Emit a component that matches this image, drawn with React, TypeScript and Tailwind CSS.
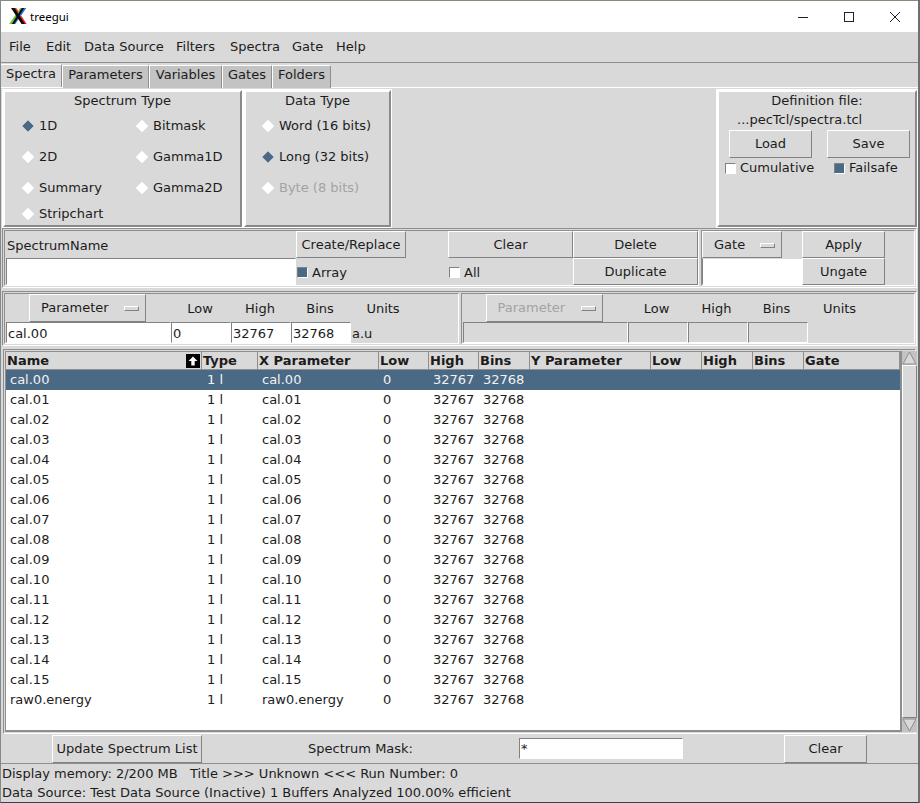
import React from "react";

const btn = "flex items-center justify-center border border-t-white border-l-white border-r-[#828282] border-b-[#828282] bg-[#d9d9d9]";
const sunk = "flex items-center border border-t-[#828282] border-l-[#828282] border-r-white border-b-white";
const groove = "border border-t-[#8e8e8e] border-l-[#8e8e8e] border-r-white border-b-white";
const ridge = "border-2 border-t-white border-l-white border-r-[#8a8a8a] border-b-[#8a8a8a]";

function Radio({ on }: { on?: boolean }) {
  return (
    <svg width="14" height="14" viewBox="0 0 14 14" className="shrink-0">
      <polygon points="7,1 13,7 7,13 1,7" fill={on ? "#4a6984" : "#ffffff"} stroke={on ? "#d9d9d9" : "#ffffff"} strokeWidth="0.6" />
    </svg>
  );
}

function RadioItem({ label, on, dim, h }: { label: string; on?: boolean; dim?: boolean; h: string }) {
  return (
    <div className={`flex items-center gap-[4px] ${h} ${dim ? "text-[#a3a3a3]" : ""}`}>
      <Radio on={on} />
      <span>{label}</span>
    </div>
  );
}

function Check({ on }: { on?: boolean }) {
  return (
    <span className={`block w-[11px] h-[11px] shrink-0 border border-t-[#828282] border-l-[#828282] border-r-white border-b-white ${on ? "bg-[#4a6984]" : "bg-white"}`} />
  );
}

function MenuBtn({ label, w, dim }: { label: string; w: string; dim?: boolean }) {
  return (
    <div className={`${btn} ${w} h-[28px] relative justify-start pl-[11px] ${dim ? "text-[#a3a3a3]" : ""}`}>
      <span>{label}</span>
      <span className="absolute right-[6px] top-[11px] w-[15px] h-[5px] border border-t-white border-l-white border-r-[#828282] border-b-[#828282]" />
    </div>
  );
}

const columns: [string, number][] = [
  ["Name", 196], ["Type", 56], ["X Parameter", 121], ["Low", 50], ["High", 50], ["Bins", 51],
  ["Y Parameter", 121], ["Low", 51], ["High", 51], ["Bins", 51], ["Gate", 96],
];

const names = [...Array.from({ length: 16 }, (_, i) => `cal.${String(i).padStart(2, "0")}`), "raw0.energy"];

const menus: [string, string][] = [
  ["File", "w-[37px]"], ["Edit", "w-[38px]"], ["Data Source", "w-[92px]"], ["Filters", "w-[54px]"],
  ["Spectra", "w-[62px]"], ["Gate", "w-[44px]"], ["Help", "w-[40px]"],
];

function ParamRow({ left, dim }: { left: boolean; dim?: boolean }) {
  const entries = [
    { w: "w-[165px]", t: left ? "cal.00" : "" },
    { w: "w-[60px]", t: left ? "0" : "" },
    { w: "w-[60px]", t: left ? "32767" : "" },
    { w: "w-[60px]", t: left ? "32768" : "" },
  ];
  return (
    <div className={`${groove} h-[51px] flex-1 flex flex-col pl-px`}>
      <div className="flex items-center h-[28px]">
        <div className="w-[23px]" />
        <MenuBtn label="Parameter" w="w-[117px]" dim={dim} />
        <span className="ml-[35px] w-[38px] text-center pt-[2px]">Low</span>
        <span className="ml-[19px] w-[44px] text-center pt-[2px]">High</span>
        <span className="ml-[18px] w-[40px] text-center pt-[2px]">Bins</span>
        <span className="ml-[18px] w-[50px] text-center pt-[2px]">Units</span>
      </div>
      <div className="flex items-center h-[21px]">
        {entries.map((e, i) => (
          <div key={i} className={`${sunk} ${e.w} h-[21px] pl-[1px] pt-[2px] ${left ? "bg-white" : ""}`}>{e.t}</div>
        ))}
        {left && <span className="ml-[1px] pt-[2px]">a.u</span>}
      </div>
    </div>
  );
}

export default function App() {
  return (
    <div className="w-[920px] h-[803px] flex flex-col bg-[#d9d9d9] text-[13px] leading-[16px] text-[#1c1c1c] overflow-hidden border-l border-l-[#7f8a8c] border-r-2 border-r-[#6f6f6f] border-b border-b-[#30454a] font-['DejaVu_Sans',sans-serif] whitespace-pre">
      {/* title bar */}
      <div className="h-[32px] shrink-0 bg-white flex items-center pl-[8px] border-t border-t-[#8a8a7a]">
        <svg width="18" height="18" viewBox="0 0 18 18" className="shrink-0 -translate-y-px">
          <path d="M2.5 1 L6 1 L16.5 17 L13 17 Z" fill="#ff2020" transform="translate(1.2 0)" />
          <path d="M12.5 1 L16 1 L5 17 L1.5 17 Z" fill="#2f6fe8" transform="translate(1.3 0)" />
          <path d="M12.5 1 L16 1 L5 17 L1.5 17 Z" fill="#5cc83a" transform="translate(-1.3 0)" />
          <path d="M2 1 L5.5 1 L16 17 L12.5 17 Z" fill="#0a0a0a" />
          <path d="M12.8 1 L15.2 1 L5.2 17 L2.8 17 Z" fill="#0a0a0a" />
        </svg>
        <span className="ml-[3px] text-[11.5px] text-black font-['Noto_Sans',sans-serif]">treegui</span>
        <div className="flex-1" />
        <svg width="14" height="14" viewBox="0 0 14 14" className="mr-[32px]"><path d="M2 7.5 H12" stroke="#222" strokeWidth="1" /></svg>
        <svg width="14" height="14" viewBox="0 0 14 14" className="mr-[32px]"><rect x="2.5" y="2.5" width="9" height="9" fill="none" stroke="#222" strokeWidth="1" /></svg>
        <svg width="14" height="14" viewBox="0 0 14 14" className="mr-[16px]"><path d="M2 2 L12 12 M12 2 L2 12" stroke="#222" strokeWidth="1" /></svg>
      </div>

      {/* menu */}
      <div className="h-[31px] shrink-0 flex items-center pl-[8px] border-b border-b-[#8e8e8e]">
        {menus.map(([m, w]) => (
          <span key={m} className={w}>{m}</span>
        ))}
      </div>

      {/* tabs */}
      <div className="h-[25px] shrink-0 flex items-stretch border-b border-b-white pt-px">
        <div className="w-[61px] flex items-center justify-center pb-[4px] border-r border-r-[#8e8e8e] border-t border-t-white">Spectra</div>
        {[["Parameters", "w-[87px]"], ["Variables", "w-[73px]"], ["Gates", "w-[50px]"], ["Folders", "w-[59px]"]].map(([t, w]) => (
          <div key={t} className={`${w} flex items-center justify-center pb-[5px] bg-[#c3c3c3] border-l border-l-white border-t border-t-white border-r border-r-[#8e8e8e] rounded-tr-[2px] mt-px h-[23px]`}>{t}</div>
        ))}
      </div>

      {/* top panels */}
      <div className="h-[139px] shrink-0 flex pl-[2px] pr-[1px] pt-[2px]">
        <div className={`${ridge} w-[239px] h-[137px] flex flex-col border-[#8a8a8a] outline-1 outline-white`}>
          <div className="h-[17px] text-center mt-px">Spectrum Type</div>
          <div className="grid grid-cols-[114px_1fr] pl-[16px]">
            <RadioItem label="1D" on h="h-[31px]" />
            <RadioItem label="Bitmask" h="h-[31px]" />
            <RadioItem label="2D" h="h-[31px]" />
            <RadioItem label="Gamma1D" h="h-[31px]" />
            <RadioItem label="Summary" h="h-[31px]" />
            <RadioItem label="Gamma2D" h="h-[31px]" />
            <RadioItem label="Stripchart" h="h-[21px]" />
          </div>
        </div>
        <div className={`${ridge} ml-[2px] w-[147px] h-[137px] flex flex-col border-[#8a8a8a] outline-1 outline-white`}>
          <div className="h-[17px] text-center mt-px">Data Type</div>
          <div className="flex flex-col pl-[15px]">
            <RadioItem label="Word (16 bits)" h="h-[31px]" />
            <RadioItem label="Long (32 bits)" on h="h-[31px]" />
            <RadioItem label="Byte (8 bits)" dim h="h-[31px]" />
          </div>
        </div>
        <div className="flex-1" />
        <div className={`${ridge} w-[200px] h-[137px] flex flex-col border-[#8a8a8a] outline-1 outline-white`}>
          <div className="h-[17px] text-center mt-px">Definition file:</div>
          <div className="h-[19px] pl-[18px] flex items-center">...pecTcl/spectra.tcl</div>
          <div className="flex pl-[10px] gap-[15px] mt-px">
            <div className={`${btn} w-[83px] h-[28px]`}>Load</div>
            <div className={`${btn} w-[83px] h-[28px]`}>Save</div>
          </div>
          <div className="flex items-center h-[20px] pl-[6px]">
            <Check />
            <span className="ml-[4px] w-[94px]">Cumulative</span>
            <Check on />
            <span className="ml-[4px]">Failsafe</span>
          </div>
        </div>
      </div>

      {/* name row */}
      <div className={`mx-[1px] h-[60px] shrink-0 flex gap-[2px] p-[1px] mt-[1px] ${groove}`}>
        <div className={`${groove} w-[695px] h-[56px] flex`}>
          <div className="w-[291px] flex flex-col">
            <div className="h-[28px] flex items-center pl-[2px] pt-[2px]">SpectrumName</div>
            <div className={`${sunk} h-[28px] bg-white ml-[1px]`} />
          </div>
          <div className="w-[152px] flex flex-col">
            <div className={`${btn} w-[110px] h-[28px]`}>Create/Replace</div>
            <div className="h-[28px] flex items-center pl-[1px] pt-[2px]"><Check on /><span className="ml-[4px]">Array</span></div>
          </div>
          <div className="w-[125px] flex flex-col">
            <div className={`${btn} h-[28px]`}>Clear</div>
            <div className="h-[28px] flex items-center pl-[1px] pt-[2px]"><Check /><span className="ml-[4px]">All</span></div>
          </div>
          <div className="w-[125px] flex flex-col">
            <div className={`${btn} h-[28px]`}>Delete</div>
            <div className={`${btn} h-[28px]`}>Duplicate</div>
          </div>
        </div>
        <div className={`${groove} w-[214px] h-[56px] flex`}>
          <div className="w-[100px] flex flex-col">
            <MenuBtn label="Gate" w="w-[80px]" />
            <div className={`${sunk} h-[28px] bg-white border-t-[#d9d9d9]`} />
          </div>
          <div className="w-[83px] flex flex-col">
            <div className={`${btn} h-[28px]`}>Apply</div>
            <div className={`${btn} h-[28px]`}>Ungate</div>
          </div>
        </div>
      </div>

      {/* param row */}
      <div className={`mx-[1px] h-[55px] shrink-0 flex gap-[2px] p-[1px] mt-[3px] ${groove}`}>
        <ParamRow left />
        <ParamRow left={false} dim />
      </div>

      {/* table */}
      <div className={`mx-[2px] mt-[3px] h-[385px] shrink-0 flex ${groove} p-px`}>
        <div className="flex-1 flex flex-col bg-white border border-[#8e8e8e] border-b-2">
          <div className="flex h-[18px] bg-[#d9d9d9] shrink-0 font-bold">
            {columns.map(([c, w], i) => (
              <div key={i} style={{ width: w }} className="relative flex items-center pl-px border-r border-r-[#8e8e8e] border-b border-b-[#8e8e8e] shrink-0">
                {c}
                {i === 0 && (
                  <span className="absolute right-[1px] top-[2px] w-[14px] h-[14px] bg-black flex items-center justify-center">
                    <svg width="10" height="10" viewBox="0 0 10 10"><path d="M5 0.5 L9.5 5 H6.7 V9.5 H3.3 V5 H0.5 Z" fill="#fff" /></svg>
                  </span>
                )}
              </div>
            ))}
          </div>
          {names.map((n, i) => (
            <div key={n} className={`flex h-[20px] items-center shrink-0 ${i === 0 ? "bg-[#4a6984] text-[#f2f2f2]" : ""}`}>
              <span className="w-[196px] pl-[4px]">{n}</span>
              <span className="w-[56px] pl-[5px]">1 l</span>
              <span className="w-[121px] pl-[4px]">{n}</span>
              <span className="w-[50px] pl-[4px]">0</span>
              <span className="w-[50px] pl-[4px]">32767</span>
              <span className="w-[51px] pl-[4px]">32768</span>
            </div>
          ))}
        </div>
        <div className="w-[16px] flex flex-col bg-[#c3c3c3] border-l border-l-[#8e8e8e]">
          <svg width="15" height="14" viewBox="0 0 15 14" className="shrink-0"><polygon points="7.5,1 14,13 1,13" fill="#d9d9d9" stroke="#8e8e8e" /></svg>
          <div className={`${btn} flex-1`} />
          <svg width="15" height="14" viewBox="0 0 15 14" className="shrink-0"><polygon points="1,1 14,1 7.5,13" fill="#d9d9d9" stroke="#8e8e8e" /></svg>
        </div>
      </div>

      {/* bottom controls */}
      <div className="h-[30px] shrink-0 flex items-center border-b border-b-[#8e8e8e] pl-[51px]">
        <div className={`${btn} w-[150px] h-[28px]`}>Update Spectrum List</div>
        <span className="w-[317px] text-center">Spectrum Mask:</span>
        <div className={`${sunk} w-[164px] h-[21px] bg-white pl-px`}>*</div>
        <div className="w-[101px]" />
        <div className={`${btn} w-[83px] h-[28px]`}>Clear</div>
      </div>

      {/* status */}
      <div className="flex-1 flex flex-col pl-[1px]">
        <div className="h-[19px] flex items-center">Display memory: 2/200 MB   Title &gt;&gt;&gt; Unknown &lt;&lt;&lt; Run Number: 0</div>
        <div className="h-[19px] flex items-center">Data Source: Test Data Source (Inactive) 1 Buffers Analyzed 100.00% efficient</div>
      </div>
    </div>
  );
}
